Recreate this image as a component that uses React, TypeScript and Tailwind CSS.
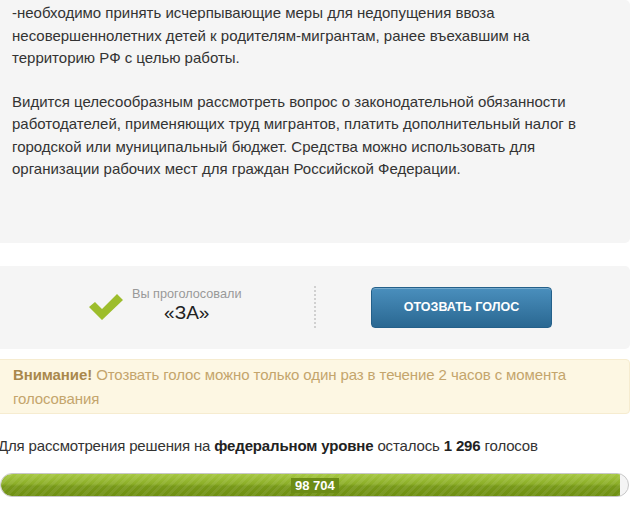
const font = { fontFamily: '"Liberation Sans", Arial, sans-serif' }

function Check() {
    return (
        <svg width="36" height="30" viewBox="0 0 36 30" className="shrink-0">
            <path d="M1 15 L7 10 L14 17 L29 2 L35 8 L14 28 Z" fill="#9dbd2c" />
        </svg>
    )
}

export default function App() {
    return (
        <div className="w-[640px] h-[510px] overflow-hidden bg-white text-[#333]" style={font}>
            {/* petition text */}
            <div className="-ml-[10px] w-[640px] bg-[#f5f5f5] rounded-[5px] pl-[22px] pt-[2px] pb-[62px] text-[15px] leading-[22.5px]">
                <div className="max-w-[582px]">
                    <p>-необходимо принять исчерпывающие меры для недопущения ввоза несовершеннолетних детей к родителям-мигрантам, ранее въехавшим на территорию РФ с целью работы.</p>
                    <p className="mt-[21px]">Видится целесообразным рассмотреть вопрос о законодательной обязанности работодателей, применяющих труд мигрантов, платить дополнительный налог в городской или муниципальный бюджет. Средства можно использовать для организации рабочих мест для граждан Российской Федерации.</p>
                </div>
            </div>

            {/* vote block */}
            <div className="-ml-[10px] w-[640px] mt-[23px] h-[83px] bg-[#f5f5f5] rounded-[5px] flex items-center">
                <div className="w-[324px] h-full flex items-center pl-[98px] gap-[8px]">
                    <Check />
                    <div className="flex flex-col items-center -mt-[4px]">
                        <span className="text-[12.7px] leading-[16px] text-[#999]">Вы проголосовали</span>
                        <span className="text-[19px] leading-[22px] text-[#222]">«ЗА»</span>
                    </div>
                </div>
                <div className="h-[42px] border-l-2 border-dotted border-[#d0d0d0]"></div>
                <div className="pl-[55px]">
                    <button className="w-[181px] h-[41px] rounded-[4px] border border-[#24608a] bg-gradient-to-b from-[#4a8fbd] to-[#2a6892] text-white font-bold text-[12.5px] uppercase shadow-[inset_0_1px_0_rgba(255,255,255,0.25)]">
                        Отозвать голос
                    </button>
                </div>
            </div>

            {/* warning */}
            <div className="-ml-[10px] w-[640px] mt-[10px] h-[55px] bg-[#fdf7e3] border border-[#f6ecd0] rounded-[4px] pl-[22px] pr-4 pt-[3px] text-[15px] leading-[24px] tracking-[-0.1px] text-[#c4a56c]">
                <b className="text-[#a9884c]">Внимание!</b> Отозвать голос можно только один раз в течение 2 часов с момента голосования
            </div>

            {/* progress */}
            <p className="-ml-[2px] mt-[21px] text-[15px] leading-[22px] tracking-[-0.15px] text-[#333]">
                Для рассмотрения решения на <b className="text-[#222]">федеральном уровне</b> осталось <b className="text-[#222]">1 296</b> голосов
            </p>
            <div className="relative w-[629px] mt-[16px] h-[24px] rounded-full border border-[#c8c8c8] bg-[#f4f4f4] overflow-hidden">
                <div className="h-full w-[619px] rounded-l-full bg-[repeating-linear-gradient(135deg,rgba(255,255,255,0.07)_0_3px,transparent_3px_6px),linear-gradient(to_bottom,#a6c842,#8cae28_45%,#78991a_55%,#6e8f12)]"></div>
                <div className="absolute left-[290px] top-[4px] h-[15px] px-[4px] bg-[#6c8c16] text-white font-bold text-[13px] leading-[15px]">98 704</div>
            </div>
        </div>
    )
}
